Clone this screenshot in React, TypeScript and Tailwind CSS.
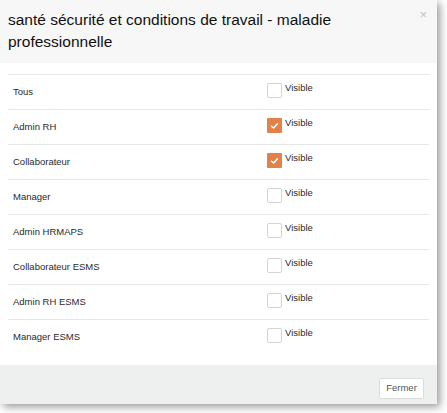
import React from "react";

const rows: { label: string; checked: boolean }[] = [
  { label: "Tous", checked: false },
  { label: "Admin RH", checked: true },
  { label: "Collaborateur", checked: true },
  { label: "Manager", checked: false },
  { label: "Admin HRMAPS", checked: false },
  { label: "Collaborateur ESMS", checked: false },
  { label: "Admin RH ESMS", checked: false },
  { label: "Manager ESMS", checked: false },
];

function Box({ checked }: { checked: boolean }) {
  if (checked) {
    return (
      <span className="w-[15px] h-[15px] bg-[#e3814a] rounded-[1px] flex items-center justify-center">
        <svg width="9" height="8" viewBox="0 0 9 8">
          <path d="M1.5 4.2 L3.6 6 L7.5 1.8" stroke="#fff" strokeWidth="1.5" fill="none" strokeLinecap="round" strokeLinejoin="round" />
        </svg>
      </span>
    );
  }
  return <span className="w-[15px] h-[15px] bg-white border border-[#d4d4d4] rounded-[2px] box-border" />;
}

export default function App() {
  return (
    <div className="w-[447px] h-[413px] bg-white relative" style={{ fontFamily: '"Liberation Sans", Arial, sans-serif' }}>
      <div className="w-[437px] h-[404px] bg-white flex flex-col shadow-[3px_3px_8px_rgba(0,0,0,0.4)] relative">
        <div className="h-[63px] bg-[#f7f7f7] pl-[8px] pr-[30px] pt-[9px] text-[15.5px] leading-[22px] text-[#111] relative">
          santé sécurité et conditions de travail - maladie professionnelle
          <span className="absolute right-[10px] top-[7px] text-[13px] text-[#c4c4c4] leading-[16px]">×</span>
        </div>
        <div className="flex-1 px-[8px] pt-[11px]">
          {rows.map((r) => (
            <div key={r.label} className="h-[35px] border-t border-[#e6e6e6] flex text-[9.5px] text-[#2a2a2a]">
              <div className="w-[259px] pl-[5px] flex items-center pt-[1px]">{r.label}</div>
              <div className="flex items-start pt-[8px] gap-[3px]">
                <Box checked={r.checked} />
                <span className="leading-[12px] -mt-[1px]">Visible</span>
              </div>
            </div>
          ))}
        </div>
        <div className="h-[39px] bg-[#eef0f0] flex justify-end items-start pt-[13px] pr-[13px]">
          <button className="w-[45px] h-[21px] bg-white border border-[#dcdcdc] rounded-[2px] text-[9.5px] text-[#555]">
            Fermer
          </button>
        </div>
      </div>
    </div>
  );
}
